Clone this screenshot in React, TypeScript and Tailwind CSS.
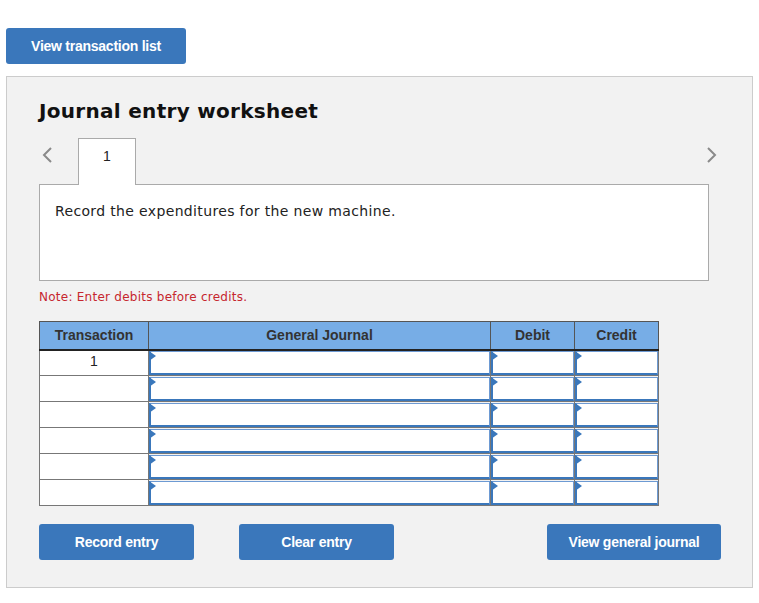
import React from "react";

const blueBtn =
  "bg-[#3a77bb] text-white font-bold text-[14px] tracking-[-0.25px] rounded-[3px] h-[36px] flex items-center justify-center";

function Chevron({ dir }: { dir: "left" | "right" }) {
  return (
    <svg width="12" height="18" viewBox="0 0 12 18" fill="none">
      <path
        d={dir === "left" ? "M10 2 L3 9 L10 16" : "M2 2 L9 9 L2 16"}
        stroke="#8a8a8a"
        strokeWidth="2"
      />
    </svg>
  );
}

function EntryInput() {
  return (
    <div className="relative h-[24px] bg-white border border-[#6d9ad3] border-l-2 border-b-2 border-l-[#3a77bb] border-b-[#3a77bb]">
      <svg className="absolute -left-[2px] -top-[1px]" width="7" height="10" viewBox="0 0 7 10">
        <path d="M0 0 L7 5 L0 10 Z" fill="#3a77bb" />
      </svg>
    </div>
  );
}

export default function App() {
  const rows = [1, 2, 3, 4, 5, 6];
  return (
    <div className="w-[759px] h-[603px] bg-white pt-[28px] px-[6px]" style={{ fontFamily: "'DejaVu Sans', Verdana, sans-serif" }}>
      <button
        className={`${blueBtn} w-[180px]`}
        style={{ fontFamily: "'Liberation Sans', Arial, sans-serif" }}
      >
        View transaction list
      </button>

      <div className="mt-[12px] w-[747px] h-[512px] bg-[#f2f2f2] border border-[#cccccc] pl-[32px] pr-[43px] pt-[20px]">
        <h1 className="text-[20px] font-bold text-[#111] leading-[28px] tracking-[0.3px]">Journal entry worksheet</h1>

        <div className="mt-[13px] flex items-end justify-between">
          <div className="flex items-end">
            <div className="w-[39px] h-[46px] flex items-start pt-[8px] pl-[2px]">
              <Chevron dir="left" />
            </div>
            <div className="relative z-10 -mb-px w-[58px] h-[47px] bg-white border border-[#aaaaaa] border-b-0 flex justify-center pt-[7px] text-[14px] text-[#222]" style={{ fontFamily: "'Liberation Sans', Arial, sans-serif" }}>
              1
            </div>
          </div>
          <div className="h-[46px] flex items-start pt-[8px] -mr-[9px]">
            <Chevron dir="right" />
          </div>
        </div>

        <div className="w-[670px] h-[97px] bg-white border border-[#aaaaaa] px-[15px] pt-[16px] text-[14px] text-[#222] tracking-[0.35px]">
          Record the expenditures for the new machine.
        </div>

        <p className="mt-[7px] text-[12px] text-[#c6262e] tracking-[0.25px]">Note: Enter debits before credits.</p>

        <table
          className="mt-[15px] border-collapse text-[14px] text-[#222]"
          style={{ fontFamily: "'Liberation Sans', Arial, sans-serif" }}
        >
          <thead>
            <tr className="bg-[#77ade6] h-[28px]">
              <th className="w-[109px] border border-[#555] border-b-2 border-b-[#222] font-bold text-[#333]">Transaction</th>
              <th className="w-[342px] border border-[#555] border-b-2 border-b-[#222] font-bold text-[#333]">General Journal</th>
              <th className="w-[84px] border border-[#555] border-b-2 border-b-[#222] font-bold text-[#333]">Debit</th>
              <th className="w-[84px] border border-[#555] border-b-2 border-b-[#222] font-bold text-[#333]">Credit</th>
            </tr>
          </thead>
          <tbody>
            {rows.map((r) => (
              <tr key={r} className="h-[26px]">
                <td className="border border-[#777] bg-white text-center align-top leading-[20px]">
                  {r === 1 ? "1" : ""}
                </td>
                <td className="border border-[#777] p-0 bg-[#f2f2f2]">
                  <EntryInput />
                </td>
                <td className="border border-[#777] p-0 bg-[#f2f2f2]">
                  <EntryInput />
                </td>
                <td className="border border-[#777] p-0 bg-[#f2f2f2]">
                  <EntryInput />
                </td>
              </tr>
            ))}
          </tbody>
        </table>

        <div className="mt-[18px] flex items-center" style={{ fontFamily: "'Liberation Sans', Arial, sans-serif" }}>
          <button className={`${blueBtn} w-[155px]`}>Record entry</button>
          <button className={`${blueBtn} w-[155px] ml-[45px]`}>Clear entry</button>
          <button className={`${blueBtn} w-[174px] ml-auto -mr-[12px]`}>View general journal</button>
        </div>
      </div>
    </div>
  );
}
